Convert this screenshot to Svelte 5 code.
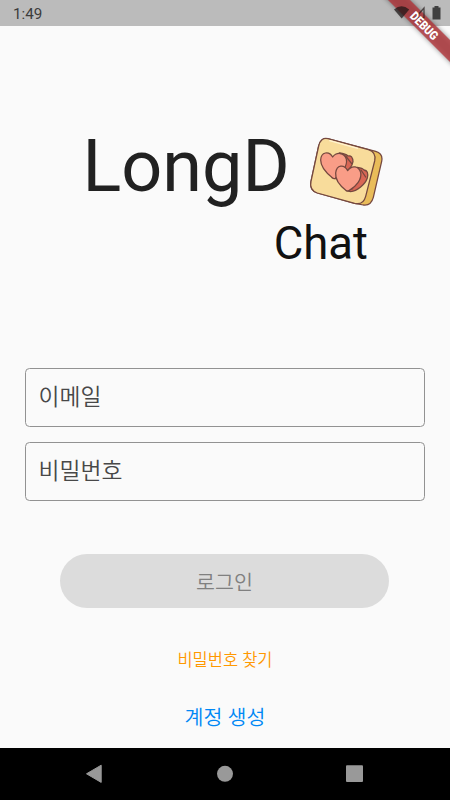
<script>
  const fields = ['이메일', '비밀번호'];
</script>

<div class="screen">
  <header class="status">
    <span class="time">1:49</span>
    <svg class="banner" width="76" height="76" viewBox="0 0 76 76" aria-hidden="true">
      <defs>
        <filter id="soft" x="-20%" y="-20%" width="140%" height="140%"><feGaussianBlur stdDeviation="2.8" /></filter>
      </defs>
      <path d="M7 -7H29L83 47V69Z" fill="#000" opacity=".42" filter="url(#soft)" />
      <path d="M14 0H36L76 40V62Z" fill="#b5353a" fill-opacity=".78" />
      <g class="signals">
        <path d="M20.5 9.5Q28 2.8 35.7 9.5L28.2 18.5Z" fill="#1c1515" opacity=".72" />
        <path d="M50.5 8V17.7H42Z" fill="none" stroke="#2b2222" stroke-width="1.3" opacity=".75" />
        <path d="M59 7.5h2V6h4v1.5h2v12h-8Z" fill="#404040" />
      </g>
      <text x="50" y="30" transform="rotate(45 50 26)" text-anchor="middle" textLength="34" lengthAdjust="spacingAndGlyphs">DEBUG</text>
    </svg>
  </header>

  <main>
    <h1>
      <span class="brand">LongD</span>
      <svg class="logo" width="76" height="72" viewBox="0 0 228 216" aria-hidden="true">
        <g stroke="#75483f" stroke-width="3.8" stroke-linejoin="round" stroke-linecap="round">
          <path d="M58 8L203 46Q226 53 221 76L196 184Q189 210 166 207L140 202L28 171Q3 162 9 136L32 30Q38 5 58 8Z" fill="#e9bc59" />
          <path d="M60 8L181 41Q206 49 200 75L173 181Q166 208 140 202L28 171Q3 162 9 136L32 30Q38 3 60 8Z" fill="#f8dc9b" />
          <path d="M94 51Q113 53 120 60Q134 57 135 77Q131 97 112 108L82 128L72 125Z" fill="#d96655" />
          <path d="M113 60L131 83" fill="none" />
          <path d="M73 125C55 111 38 94 38 72C39 47 63 44 74 63C85 48 108 48 115 69C120 91 98 116 82 127Q77 130 73 125Z" fill="#f99d87" />
          <path d="M148 94Q164 96 168 102Q183 104 178 126C172 145 147 166 128 167L115 164Z" fill="#d96655" />
          <path d="M159 102L173 123M118 164L134 158" fill="none" />
          <path d="M115 164C98 151 81 132 83 111C86 86 108 84 119 104C132 86 153 90 158 110C162 130 144 152 124 163Q119 166 115 164Z" fill="#f99d87" />
        </g>
        <path d="M65 14L149 37" fill="none" stroke="#fff3d1" stroke-width="3.5" stroke-linecap="round" />
      </svg>
      <span class="chat">Chat</span>
    </h1>

    <form onsubmit={(e) => e.preventDefault()}>
      {#each fields as field}
        <div class="field"><span>{field}</span></div>
      {/each}
      <button class="login" disabled><span>로그인</span></button>
      <button class="find" type="button">비밀번호 찾기</button>
      <button class="create" type="button">계정 생성</button>
    </form>
  </main>

  <nav>
    <svg width="450" height="52" viewBox="0 0 450 52" aria-hidden="true">
      <g fill="#999">
        <path d="M86.5 25.8L101.2 17.2V34.4Z" stroke="#999" stroke-linejoin="round" />
        <circle cx="225" cy="25.8" r="8" />
        <rect x="346" y="17.3" width="17" height="16.8" rx="1" />
      </g>
    </svg>
  </nav>
</div>

<style>
  :global(body) { margin: 0; }
  .screen {
    width: 450px;
    height: 800px;
    display: flex;
    flex-direction: column;
    overflow: hidden;
    background: #fafafa;
    font-family: Roboto, "Noto Sans CJK KR", sans-serif;
  }
  .status {
    position: relative;
    z-index: 1;
    flex: none;
    height: 26px;
    display: flex;
    align-items: center;
    background: #bbb;
  }
  .time { padding: 2px 0 0 13px; font-size: 15.2px; line-height: 18px; color: #3c3c3c; }
  .banner { position: absolute; top: 0; right: 0; }
  .signals { transform: translateX(-.5px); }
  .banner text { fill: #fff; font-size: 12.5px; font-weight: 900; }
  main { flex: 1; display: flex; flex-direction: column; }
  h1 {
    height: 342px;
    box-sizing: border-box;
    margin: 0;
    padding: 99px 66px 0 82.5px;
    display: flex;
    flex-wrap: wrap;
    align-content: flex-start;
    justify-content: space-between;
    font-weight: 400;
    color: #212121;
  }
  .brand { font-size: 72px; line-height: 84px; }
  .logo { margin-top: 11px; }
  .chat {
    width: 100%;
    padding-right: 16px;
    text-align: right;
    font-size: 45.5px;
    line-height: 54px;
    margin-top: 8px;
    color: #111;
  }
  form { padding: 0 25px; display: flex; flex-direction: column; align-items: center; }
  .field {
    width: 100%;
    height: 59px;
    box-sizing: border-box;
    margin-bottom: 15px;
    border: 1px solid #929292;
    border-radius: 4.5px;
    padding-left: 12.5px;
    display: flex;
    align-items: center;
    font-size: 22.8px;
    font-weight: 350;
    line-height: 30px;
    color: #484848;
  }
  button {
    border: 0;
    padding: 0;
    background: none;
    font-family: inherit;
    font-weight: 350;
    white-space: nowrap;
  }
  .login {
    width: 329px;
    height: 54px;
    margin-top: 38px;
    margin-right: 1px;
    border-radius: 27px;
    background: #dcdcdc;
    color: #808080;
    font-size: 20.6px;
  }
  .find { height: 24px; margin-top: 41px; color: #ff9800; font-size: 16.5px; line-height: 24px; }
  .create { height: 30px; margin-top: 30px; color: #0088f5; font-size: 20.6px; line-height: 30px; }
  nav { flex: none; height: 52px; background: #000; }
  nav svg { display: block; }
</style>
